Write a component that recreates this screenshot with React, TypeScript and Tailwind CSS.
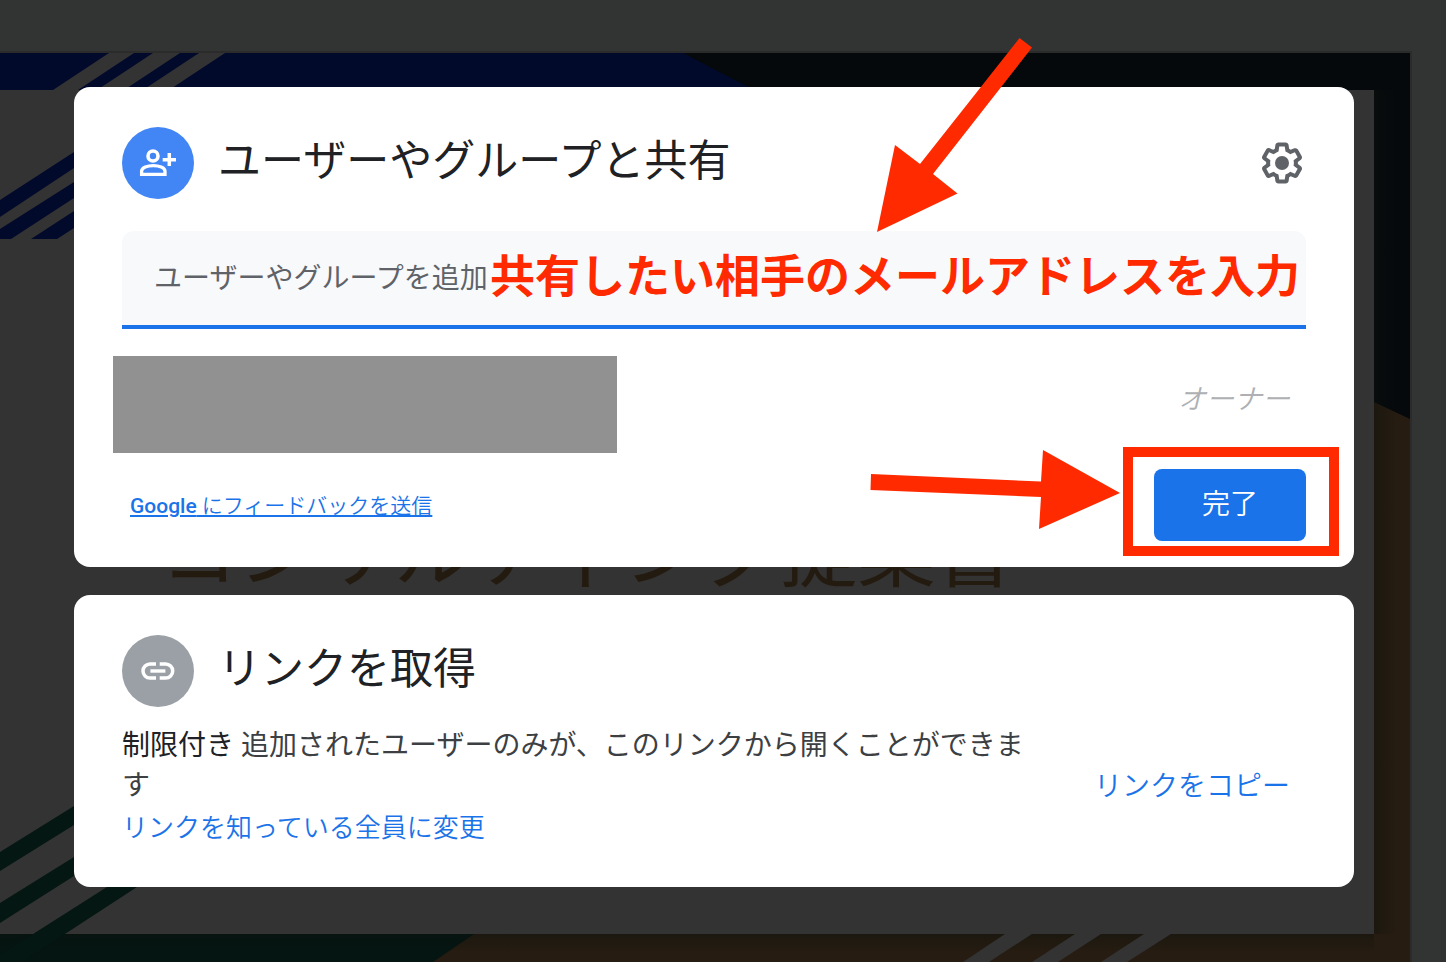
import type { ReactNode } from "react";

function SlideBackground() {
  return (
    <svg
      className="absolute inset-0 size-full"
      viewBox="0 0 1446 962"
      preserveAspectRatio="xMinYMin slice"
      aria-hidden="true"
    >
      <defs>
        <linearGradient id="sideShadow" x1="0" x2="1" y1="0" y2="0">
          <stop offset="0" stopColor="#0c110c" stopOpacity="0.4" />
          <stop offset="1" stopColor="#0c110c" stopOpacity="0" />
        </linearGradient>
        <linearGradient id="bottomShadow" x1="0" x2="0" y1="0" y2="1">
          <stop offset="0" stopColor="#0c110c" stopOpacity="0.4" />
          <stop offset="1" stopColor="#0c110c" stopOpacity="0" />
        </linearGradient>
      </defs>
      <rect width="1446" height="962" fill="#323433" />
      <rect x="1441" width="5" height="962" fill="#303131" />
      <rect y="51" width="1412" height="911" fill="#2b2b2b" />

      {/* slide frame */}
      <rect y="53" width="1410" height="909" fill="#05090c" />
      <path d="M0 53H683L754 90H0Z" fill="#020a2c" />
      <path d="M1374 402L1410 419V962H1374Z" fill="#261c11" />
      <rect y="934" width="1410" height="28" fill="#261c11" />
      <path d="M0 934H474L433 962H0Z" fill="#041512" />
      <rect x="1374" y="90" width="22" height="844" fill="url(#sideShadow)" />
      <rect y="934" width="1374" height="18" fill="url(#bottomShadow)" />

      {/* paper and stripes */}
      <rect y="90" width="1374" height="844" fill="#333333" />
      <path
        d="M109 53H134L78 90H53ZM153 53H180L124 90H97ZM199 53H225L169 90H143Z"
        fill="#333333"
      />
      <path
        d="M0 200L74 152V168L0 217ZM0 229L74 182V198L11 239H0ZM31 239L74 211V228L57 239Z"
        fill="#020a2c"
      />
      <path
        d="M0 852L74 806V825L0 871ZM0 903L74 857V876L0 923ZM107 887H137L22 962H0V955Z"
        fill="#041713"
      />
      <path
        d="M1005 934H1032L989 962H963ZM1075 934H1101L1058 962H1032ZM1144 934H1171L1127 962H1101Z"
        fill="#333333"
      />
      <text
        x="160"
        y="581"
        fontSize="78"
        fill="#241b10"
        fontFamily="'Noto Sans CJK JP', sans-serif"
      >
        コンサルティング提案書
      </text>
    </svg>
  );
}

function PersonAddIcon() {
  return (
    <svg viewBox="0 0 72 72" className="size-full" fill="none" stroke="white" aria-hidden="true">
      <circle cx="31" cy="29" r="5" strokeWidth="3.6" />
      <path
        d="M19.6 47.4v-3.2c0-3.6 6-5.6 11.7-5.6s11.7 2 11.7 5.6v3.2z"
        strokeWidth="3.3"
      />
      <path d="M40.7 32.7H54M47.3 26v13" strokeWidth="3.5" />
    </svg>
  );
}

function LinkIcon() {
  return (
    <svg viewBox="0 0 72 72" className="size-full" fill="none" stroke="white" aria-hidden="true">
      <path
        d="M34 29h-6a7 7 0 0 0 0 14h6M37.7 29h6a7 7 0 0 1 0 14h-6"
        strokeWidth="3.5"
      />
      <path d="M28.4 36H43.4" strokeWidth="3.4" />
    </svg>
  );
}

function GearIcon() {
  return (
    <svg viewBox="0 0 24 24" className="size-12" fill="currentColor" aria-hidden="true">
      <path d="M13.85 22.25h-3.7c-.74 0-1.36-.54-1.45-1.27l-.27-1.89c-.27-.14-.53-.29-.79-.46l-1.8.72c-.7.26-1.47-.03-1.81-.65L2.2 15.53c-.35-.66-.2-1.44.36-1.88l1.53-1.19c-.01-.15-.02-.3-.02-.46 0-.15.01-.31.02-.46l-1.52-1.19c-.59-.45-.74-1.26-.37-1.88l1.85-3.19c.34-.62 1.11-.9 1.79-.63l1.81.73c.26-.17.52-.32.78-.46l.27-1.91c.09-.7.71-1.25 1.44-1.25h3.7c.74 0 1.36.54 1.45 1.27l.27 1.89c.27.14.53.29.79.46l1.8-.72c.71-.26 1.48.03 1.82.65l1.84 3.18c.36.66.2 1.44-.36 1.88l-1.52 1.19c.01.15.02.3.02.46s-.01.31-.02.46l1.52 1.19c.56.45.72 1.23.37 1.86l-1.86 3.22c-.34.62-1.11.9-1.8.63l-1.8-.72c-.26.17-.52.32-.78.46l-.27 1.91c-.1.68-.72 1.22-1.46 1.22zm-3.23-2h2.76l.37-2.55.53-.22c.44-.18.88-.44 1.34-.78l.45-.34 2.38.96 1.38-2.4-2.03-1.58.07-.56c.03-.26.06-.51.06-.78s-.03-.53-.06-.78l-.07-.56 2.03-1.58-1.39-2.4-2.39.96-.45-.35c-.42-.32-.87-.58-1.33-.77l-.52-.22-.37-2.55h-2.76l-.37 2.55-.53.21c-.44.19-.88.44-1.34.79l-.45.33-2.38-.95-1.39 2.39 2.03 1.58-.07.56a7 7 0 0 0-.06.79c0 .26.02.53.06.78l.07.56-2.03 1.58 1.38 2.4 2.39-.96.45.35c.43.33.86.58 1.33.77l.53.22.38 2.55z" />
      <circle cx="12" cy="12" r="3.5" />
    </svg>
  );
}

interface CardHeaderProps {
  title: string;
  icon: ReactNode;
  iconClassName: string;
  children?: ReactNode;
}

function CardHeader({ title, icon, iconClassName, children }: CardHeaderProps) {
  return (
    <header className="flex items-center">
      <div className={`size-[72px] shrink-0 rounded-full ${iconClassName}`}>{icon}</div>
      <h1 className="ml-6 grow pb-1 text-[43px] leading-[64px] text-[#202124]">{title}</h1>
      {children}
    </header>
  );
}

function Arrows() {
  return (
    <svg
      className="pointer-events-none absolute top-0 right-0 h-[480px] w-[500px] overflow-visible"
      viewBox="0 0 500 480"
      fill="#ff2a00"
      aria-hidden="true"
    >
      <path d="M23 145L41 58L66 77L165.5 -49L178 -39.5L79 87L103.5 106.5Z" />
      <path d="M17 387L187 394.5L189 363L266 406L185 442L187 410L16.5 403Z" />
    </svg>
  );
}

function ShareCard() {
  return (
    <section className="relative rounded-2xl bg-white px-12 pt-10 pb-[26px]">
      <CardHeader
        title="ユーザーやグループと共有"
        icon={<PersonAddIcon />}
        iconClassName="bg-[#4285f4]"
      >
        <button type="button" aria-label="設定" className="text-[#5f6368]">
          <GearIcon />
        </button>
      </CardHeader>

      <div className="mt-8 flex h-[98px] items-center rounded-t-xl border-b-4 border-[#1a73e8] bg-[#f8f9fb] pl-8 whitespace-nowrap">
        <input
          type="text"
          aria-label="ユーザーやグループを追加"
          placeholder="ユーザーやグループを追加"
          className="h-14 w-[336px] shrink-0 text-[28px] outline-none placeholder:text-[#5f6368]"
        />
        <strong className="text-[45px] leading-[64px] font-bold text-[#ff2a00]">
          共有したい相手のメールアドレスを入力
        </strong>
      </div>

      <div className="mt-[27px] flex justify-between pr-4">
        <div className="-ml-[9px] h-[97px] w-[504px] bg-[#919191]"></div>
        <span className="mt-6 text-[28px] leading-10 font-[350] text-[#aeb0b3] italic">オーナー</span>
      </div>

      <div className="mt-4 flex items-center justify-between pl-2">
        <a
          href="#feedback"
          className="pt-1 text-[21px] font-[350] text-[#1a73e8] underline decoration-2 underline-offset-2"
        >
          <span className="font-medium">Google</span> にフィードバックを送信
        </a>
        <div className="relative">
          <button
            type="button"
            className="h-[72px] w-[152px] rounded-lg bg-[#1a73e8] text-[28px] font-[350] text-white"
          >
            完了
          </button>
          <div className="pointer-events-none absolute -top-[22px] -right-[33px] -bottom-[15px] -left-[31px] border-[10px] border-[#ff2a00]"></div>
        </div>
      </div>
      <Arrows />
    </section>
  );
}

function LinkCard() {
  return (
    <section className="rounded-2xl bg-white px-12 pt-10 pb-[39px]">
      <CardHeader title="リンクを取得" icon={<LinkIcon />} iconClassName="bg-[#9aa0a6]" />
      <div className="mt-[19px] flex items-center gap-8">
        <div className="flex-1">
          <p className="text-[28px] leading-10 break-all text-[#3c4043]">
            <span className="text-[#202124]">制限付き</span> 追加されたユーザーのみが、このリンクから開くことができます
          </p>
          <button type="button" className="mt-0.5 text-[26px] leading-10 font-[350] text-[#1a73e8]">
            リンクを知っている全員に変更
          </button>
        </div>
        <button type="button" className="px-4 text-[28px] leading-10 font-[350] text-[#1a73e8]">
          リンクをコピー
        </button>
      </div>
    </section>
  );
}

export default function App() {
  return (
    <div
      lang="ja"
      className="relative min-h-screen overflow-hidden bg-[#323433] font-[Roboto,'Noto_Sans_CJK_JP',sans-serif]"
    >
      <SlideBackground />
      <main className="relative flex flex-col gap-7 pt-[87px] pr-[92px] pb-[75px] pl-[74px]">
        <ShareCard />
        <LinkCard />
      </main>
    </div>
  );
}
